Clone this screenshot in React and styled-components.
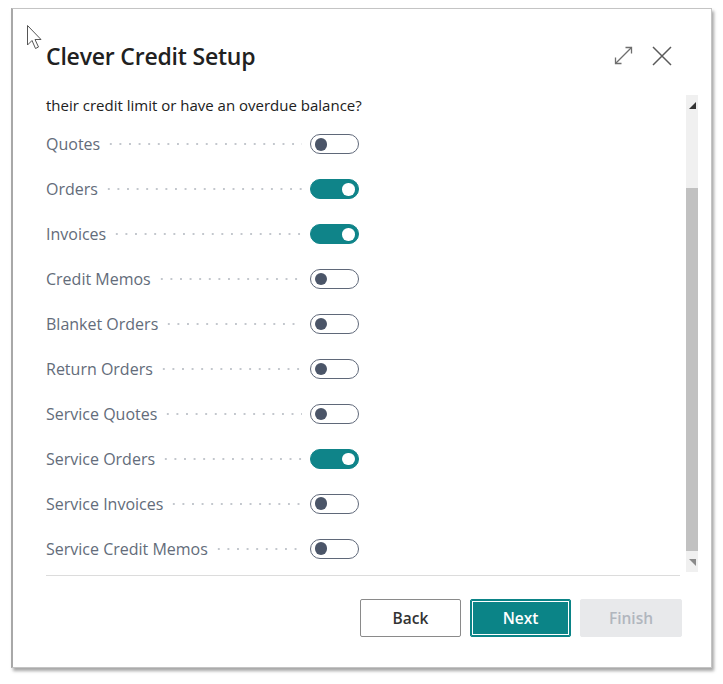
import styled, { createGlobalStyle } from "styled-components";

const GlobalStyle = createGlobalStyle`
  body {
    margin: 0;
    background: #ffffff;
    font-family: "Open Sans", "Noto Sans", sans-serif;
  }
`;

const Page = styled.div`
  position: relative;
  width: 723px;
  height: 684px;
  padding: 8px 0 0 11px;
  box-sizing: border-box;
`;

const Dialog = styled.div`
  width: 701px;
  height: 660px;
  box-sizing: border-box;
  background: #fff;
  border: 1px solid #c4c4c4;
  border-left: 2px solid #a8a8a8;
  box-shadow: 2px 3px 3px rgba(0, 0, 0, 0.35);
  display: flex;
  flex-direction: column;
`;

const Header = styled.div`
  height: 86px;
  padding: 8px 39px 0 33px;
  display: flex;
  align-items: center;
  justify-content: space-between;
  box-sizing: border-box;
`;

const Title = styled.h1`
  margin: 0;
  font-size: 23px;
  font-weight: 600;
  color: #212121;
  letter-spacing: -0.2px;
`;

const HeaderIcons = styled.div`
  display: flex;
  align-items: center;
  gap: 19px;
  margin-top: -1px;
`;

const Body = styled.div`
  flex: 1;
  display: flex;
  padding-right: 13px;
  min-height: 0;
`;

const Content = styled.div`
  flex: 1;
  padding: 0 6px 0 33px;
  display: flex;
  flex-direction: column;
`;

const Intro = styled.div`
  font-size: 15px;
  line-height: 20px;
  color: #212121;
  margin-bottom: 7px;
`;

const Row = styled.div`
  height: 45px;
  display: flex;
  align-items: center;
`;

const Label = styled.span`
  font-size: 16px;
  color: #636c7a;
  white-space: nowrap;
  padding-right: 6px;
`;

const Leader = styled.span`
  flex: 1;
  height: 4px;
  margin-right: 8px;
  background-image: radial-gradient(circle, #c3c7cd 0.9px, transparent 1.2px);
  background-size: 9.6px 4px;
  background-position: left center;
  background-repeat: repeat-x;
`;

const LabelCell = styled.div`
  width: 264px;
  display: flex;
  align-items: center;
  overflow: hidden;
`;

const Toggle = styled.span`
  width: 49px;
  height: 20px;
  box-sizing: border-box;
  border-radius: 10px;
  border: 1.5px solid ${(p) => (p.$on ? "#0f8489" : "#5f6879")};
  background: ${(p) => (p.$on ? "#0f8489" : "#fff")};
  display: flex;
  align-items: center;
  justify-content: ${(p) => (p.$on ? "flex-end" : "flex-start")};
  padding: 0 3.5px;

  &::after {
    content: "";
    width: 12.5px;
    height: 12.5px;
    border-radius: 50%;
    background: ${(p) => (p.$on ? "#fff" : "#4b5568")};
  }
`;

const Divider = styled.div`
  border-top: 1px solid #dcdcdc;
  margin-top: 4px;
`;

const Scrollbar = styled.div`
  width: 12px;
  background: #f0f0f0;
  display: flex;
  flex-direction: column;
  height: 477px;
`;

const ScrollArrow = styled.div`
  height: 20px;
  display: flex;
  align-items: center;
  justify-content: flex-end;
  padding-right: 2px;
`;

const Thumb = styled.div`
  margin-top: 73px;
  height: 363px;
  background: #c1c1c1;
`;

const Spacer = styled.div`
  flex: 1;
`;

const Footer = styled.div`
  display: flex;
  justify-content: flex-end;
  gap: 9px;
  padding: 23px 29px 30px 0;
`;

const Button = styled.button`
  width: ${(p) => (p.$wide ? "102px" : "101px")};
  height: 38px;
  border-radius: 2px;
  font-family: "Open Sans", "Noto Sans", sans-serif;
  font-size: 15.5px;
  font-weight: 600;
  cursor: pointer;
  border: 1px solid #8a8a8a;
  background: #fff;
  color: #333;

  &.primary {
    background: #0b8487;
    border: 1px solid #0b8487;
    color: #fff;
    box-shadow: inset 0 0 0 1px #0b8487, inset 0 0 0 2px #ffffff;
  }

  &:disabled {
    background: #e8e9eb;
    border-color: #e8e9eb;
    color: #b1b6be;
    cursor: default;
  }
`;

const Cursor = styled.svg`
  position: absolute;
  left: 26px;
  top: 24px;
`;

const rows = [
  ["Quotes", false],
  ["Orders", true],
  ["Invoices", true],
  ["Credit Memos", false],
  ["Blanket Orders", false],
  ["Return Orders", false],
  ["Service Quotes", false],
  ["Service Orders", true],
  ["Service Invoices", false],
  ["Service Credit Memos", false],
];

const App = () => {
  return (
    <Page>
      <GlobalStyle />
      <Dialog>
        <Header>
          <Title>Clever Credit Setup</Title>
          <HeaderIcons>
            <svg width="19" height="19" viewBox="0 0 19 19" fill="none" stroke="#6e6e6e" strokeWidth="1.3">
              <path d="M1.5 17.5 L17.5 1.5" />
              <path d="M11.5 1.5 H17.5 V7.5" />
              <path d="M1.5 11.5 V17.5 H7.5" />
            </svg>
            <svg width="20" height="20" viewBox="0 0 20 20" fill="none" stroke="#5a5a5a" strokeWidth="1.5">
              <path d="M1 1 L19 19 M19 1 L1 19" />
            </svg>
          </HeaderIcons>
        </Header>
        <Body>
          <Content>
            <Intro>their credit limit or have an overdue balance?</Intro>
            {rows.map(([name, on]) => (
              <Row key={name}>
                <LabelCell>
                  <Label>{name}</Label>
                  <Leader />
                </LabelCell>
                <Toggle $on={on} />
              </Row>
            ))}
            <Divider />
          </Content>
          <Scrollbar>
            <ScrollArrow>
              <svg width="7" height="7" viewBox="0 0 7 7">
                <path d="M7 0 V7 H0 Z" fill="#333" />
              </svg>
            </ScrollArrow>
            <Thumb />
            <Spacer />
            <ScrollArrow>
              <svg width="7" height="7" viewBox="0 0 7 7">
                <path d="M0 0 H7 V7 Z" fill="#8a8a8a" />
              </svg>
            </ScrollArrow>
          </Scrollbar>
        </Body>
        <Footer>
          <Button>Back</Button>
          <Button className="primary">Next</Button>
          <Button $wide disabled>
            Finish
          </Button>
        </Footer>
      </Dialog>
      <Cursor width="18" height="27" viewBox="0 0 18 27">
        <path
          d="M1.5 1.5 V21 L6 16.5 L9.5 24.5 L12.5 23 L9 15.5 H15 Z"
          fill="#fff"
          stroke="#555"
          strokeWidth="1"
          strokeLinejoin="round"
        />
      </Cursor>
    </Page>
  );
};

export default App;
